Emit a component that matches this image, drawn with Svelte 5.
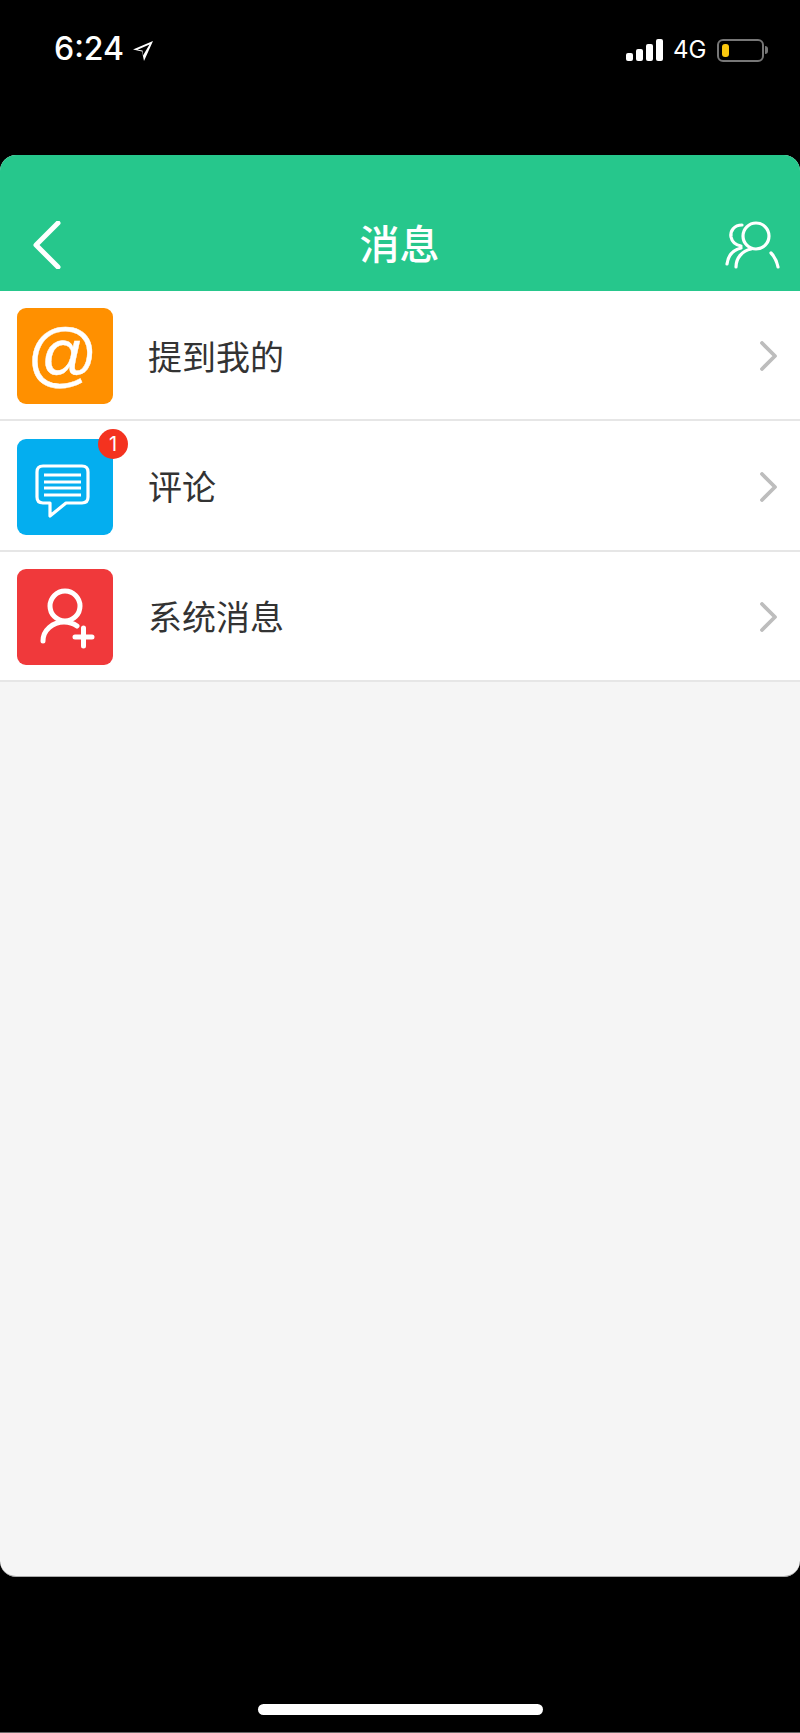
<script>
    const rows = [
        { label: "提到我的", kind: "at" },
        { label: "评论", kind: "chat", badge: 1 },
        { label: "系统消息", kind: "user" }
    ]
</script>

<div class="page">
    <div class="status">
        <div class="status-left">
            <span class="time">6:24</span>
            <svg class="arrow" width="22" height="22" viewBox="0 0 22 22">
                <path d="M21 1 L1 9.5 L10 11.5 L12 21 Z M17.5 4.5 L11 15.5 L10.5 10.5 L5.5 9.8 Z" fill="#fff" fill-rule="evenodd"/>
            </svg>
        </div>
        <div class="status-right">
            <div class="signal">
                <i style="height: 8px"></i>
                <i style="height: 12px"></i>
                <i style="height: 17px"></i>
                <i style="height: 22px"></i>
            </div>
            <span class="net">4G</span>
            <div class="battery"><b></b></div>
            <div class="nub"></div>
        </div>
    </div>

    <div class="card">
        <div class="header">
            <svg class="back" width="30" height="48" viewBox="0 0 30 48">
                <path d="M26 2 L4 24 L26 46" fill="none" stroke="#fff" stroke-width="5" stroke-linecap="round" stroke-linejoin="round"/>
            </svg>
            <span class="title">消息</span>
            <svg class="group" width="58" height="50" viewBox="0 0 58 50">
                <circle cx="32" cy="17" r="13" fill="none" stroke="#fff" stroke-width="3.2"/>
                <path d="M12 48 C12 39 18 32 27 30" fill="none" stroke="#fff" stroke-width="3.2" stroke-linecap="round"/>
                <path d="M47 34 C51 38 53 43 54 48" fill="none" stroke="#fff" stroke-width="3.2" stroke-linecap="round"/>
                <path d="M18 6 C10 6 6 12 7 18 C8 23 12 26 17 27" fill="none" stroke="#fff" stroke-width="3.2" stroke-linecap="round"/>
                <path d="M3 45 C4 37 9 31 17 29" fill="none" stroke="#fff" stroke-width="3.2" stroke-linecap="round"/>
            </svg>
        </div>

        <div class="list">
            {#each rows as row}
                <div class="row">
                    <div class="icon {row.kind}">
                        {#if row.kind === "at"}
                            <span class="at-sign">@</span>
                        {:else if row.kind === "chat"}
                            <svg width="96" height="96" viewBox="0 0 96 96">
                                <path d="M26 27 H65 Q71 27 71 33 V58 Q71 64 65 64 H49 L33 77 V64 H26 Q20 64 20 58 V33 Q20 27 26 27 Z" fill="none" stroke="#fff" stroke-width="3.2" stroke-linejoin="round"/>
                                <path d="M27 36 H64 M27 43 H64 M27 49 H64 M27 56 H64" stroke="#fff" stroke-width="3.2"/>
                            </svg>
                        {:else}
                            <svg width="96" height="96" viewBox="0 0 96 96">
                                <circle cx="48" cy="37" r="15" fill="none" stroke="#fff" stroke-width="5"/>
                                <path d="M26 72 C26 61 36 53 47 53 C52 53 56 54 60 57" fill="none" stroke="#fff" stroke-width="5" stroke-linecap="round"/>
                                <path d="M58 68 H75 M66.500 59 V77" stroke="#fff" stroke-width="5" stroke-linecap="round"/>
                            </svg>
                        {/if}
                        {#if row.badge}
                            <span class="badge">{row.badge}</span>
                        {/if}
                    </div>
                    <span class="label">{row.label}</span>
                    <svg class="chevron" width="18" height="30" viewBox="0 0 18 30">
                        <path d="M2 2 L15 15 L2 28" fill="none" stroke="#bdbdbd" stroke-width="3.800" stroke-linecap="round" stroke-linejoin="round"/>
                    </svg>
                </div>
            {/each}
        </div>
    </div>

    <div class="home-area">
        <div class="home-bar"></div>
    </div>
</div>

<style>
    :global(body) {
        margin: 0;
        background: #000;
    }

    .page {
        width: 800px;
        height: 1733px;
        background: #000;
        display: flex;
        flex-direction: column;
        box-sizing: border-box;
        border-bottom: 1px solid #666;
        font-family: "Liberation Sans", "Noto Sans CJK SC", sans-serif;
    }

    .status {
        height: 155px;
        flex: none;
        box-sizing: border-box;
        padding: 33px 32px 0 54px;
        display: flex;
        justify-content: space-between;
        align-items: flex-start;
        color: #fff;
    }

    .status-left {
        display: flex;
        align-items: center;
        gap: 8px;
    }

    .time {
        font-family: Inter, sans-serif;
        font-size: 32px;
        font-weight: 500;
        line-height: 32px;
    }

    .arrow {
        margin-top: 4px;
    }

    .status-right {
        display: flex;
        align-items: center;
        margin-top: 5px;
    }

    .signal {
        display: flex;
        align-items: flex-end;
        gap: 3px;
        height: 22px;
    }

    .signal i {
        width: 7px;
        background: #fff;
        border-radius: 2px;
    }

    .net {
        font-family: Inter, sans-serif;
        font-size: 24px;
        line-height: 24px;
        margin-left: 10px;
        width: 44px;
    }

    .battery {
        width: 47px;
        height: 23px;
        box-sizing: border-box;
        border: 2px solid #777;
        border-radius: 6px;
        padding: 3px;
    }

    .battery b {
        display: block;
        width: 7px;
        height: 13px;
        background: #fbc80e;
        border-radius: 3px;
    }

    .nub {
        width: 3px;
        height: 8px;
        background: #777;
        border-radius: 0 3px 3px 0;
        margin-left: 1px;
    }

    .card {
        height: 1422px;
        flex: none;
        background: #f5f5f5;
        border-radius: 16px;
        border-bottom: 1px solid #aaa;
        box-sizing: border-box;
        overflow: hidden;
        display: flex;
        flex-direction: column;
    }

    .header {
        height: 136px;
        flex: none;
        background: #26c78c;
        box-sizing: border-box;
        padding: 0 18px 22px 32px;
        display: flex;
        align-items: flex-end;
        justify-content: space-between;
        position: relative;
    }

    .title {
        position: absolute;
        left: -1px;
        right: 0;
        top: 63px;
        text-align: center;
        color: #fff;
        font-size: 40px;
        line-height: 48px;
        font-weight: 500;
        font-family: "Noto Sans CJK SC", sans-serif;
    }

    .row {
        height: 130.4px;
        box-sizing: border-box;
        background: #fff;
        border-bottom: 2px solid #e6e6e6;
        display: flex;
        align-items: center;
        padding: 2px 22px 0 17px;
    }

    .icon {
        width: 96px;
        height: 96px;
        border-radius: 9px;
        position: relative;
        flex: none;
        display: flex;
        align-items: center;
        justify-content: center;
    }

    .icon.at {
        background: #ff9000;
    }

    .icon.chat {
        background: #04aeef;
    }

    .icon.user {
        background: #f0393b;
    }

    .at-sign {
        color: #fff;
        font-family: "Liberation Sans", sans-serif;
        font-size: 70px;
        line-height: 70px;
        margin: -4px 0 0 -5px;
        -webkit-text-stroke: 0.4px #fff;
    }

    .badge {
        position: absolute;
        top: -10px;
        right: -15px;
        width: 30px;
        height: 30px;
        border-radius: 50%;
        background: #f4321f;
        color: #fff;
        font-family: Inter, sans-serif;
        font-size: 20px;
        line-height: 30px;
        text-align: center;
    }

    .label {
        flex: 1;
        margin: -2px 0 0 35px;
        font-size: 34px;
        color: #333;
        font-family: "Noto Sans CJK SC", sans-serif;
    }

    .home-area {
        flex: 1;
        display: flex;
        justify-content: center;
        padding-top: 127px;
    }

    .home-bar {
        width: 285px;
        height: 11px;
        border-radius: 6px;
        background: #fff;
    }
</style>
